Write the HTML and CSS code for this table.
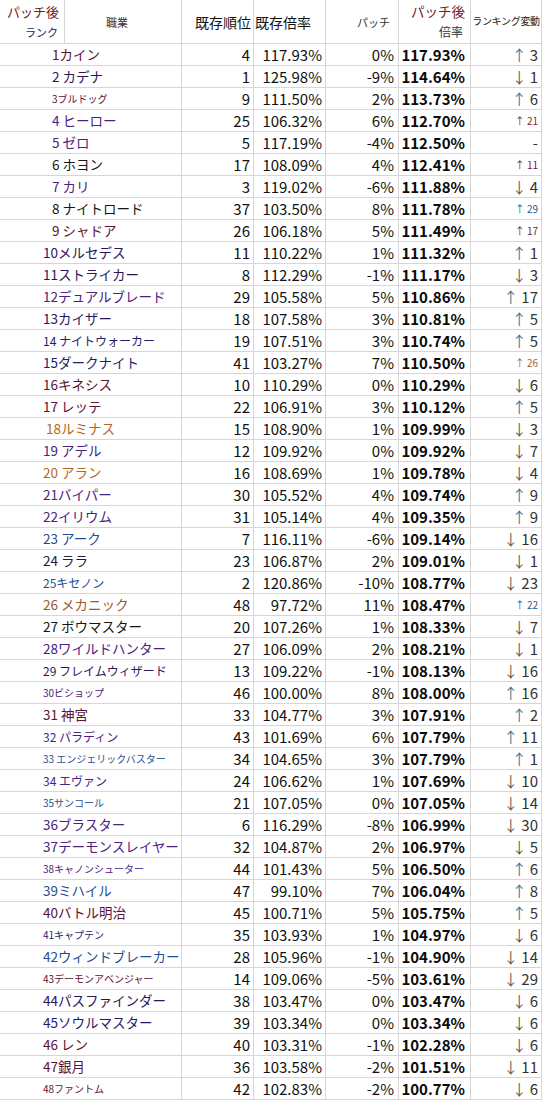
FILE: index.html
```html
<!DOCTYPE html>
<html lang="ja">
<head>
<meta charset="utf-8">
<title>パッチ後ランク</title>
<link rel="stylesheet" href="styles.css">
</head>
<body>
<div class="sheet">
  <div class="hdr">
    <div class="hc h-rank"><span class="h-patch">パッチ後</span><span class="h-ranklbl">ランク</span></div>
    <div class="hc h-job">職業</div>
    <div class="hc h-old">既存順位</div>
    <div class="hc h-oldr">既存倍率</div>
    <div class="hc h-p">パッチ</div>
    <div class="hc h-new"><span class="h-patch">パッチ後</span><span class="h-rate">倍率</span></div>
    <div class="hc h-chg">ランキング変動</div>
  </div>

  <div class="row"><div class="c name one c-mar">1カイン</div><div class="c n">4</div><div class="c n">117.93%</div><div class="c n p">0%</div><div class="c n b">117.93%</div><div class="c chg"><span class="up">↑</span>3</div></div>
  <div class="row"><div class="c name one c-dpu">2 カデナ</div><div class="c n">1</div><div class="c n">125.98%</div><div class="c n p">-9%</div><div class="c n b">114.64%</div><div class="c chg"><span class="dn">↓</span>1</div></div>
  <div class="row"><div class="c name one c-mar sm">3ブルドッグ</div><div class="c n">9</div><div class="c n">111.50%</div><div class="c n p">2%</div><div class="c n b">113.73%</div><div class="c chg"><span class="up">↑</span>6</div></div>
  <div class="row"><div class="c name one c-pur">4 ヒーロー</div><div class="c n">25</div><div class="c n">106.32%</div><div class="c n p">6%</div><div class="c n b">112.70%</div><div class="c chg mini c-red">↑ 21</div></div>
  <div class="row"><div class="c name one c-pur">5 ゼロ</div><div class="c n">5</div><div class="c n">117.19%</div><div class="c n p">-4%</div><div class="c n b">112.50%</div><div class="c chg">-</div></div>
  <div class="row"><div class="c name one c-blk">6 ホヨン</div><div class="c n">17</div><div class="c n">108.09%</div><div class="c n p">4%</div><div class="c n b">112.41%</div><div class="c chg mini c-mar">↑ 11</div></div>
  <div class="row"><div class="c name one c-pur">7 カリ</div><div class="c n">3</div><div class="c n">119.02%</div><div class="c n p">-6%</div><div class="c n b">111.88%</div><div class="c chg"><span class="dn">↓</span>4</div></div>
  <div class="row"><div class="c name one c-blk">8 ナイトロード</div><div class="c n">37</div><div class="c n">103.50%</div><div class="c n p">8%</div><div class="c n b">111.78%</div><div class="c chg mini c-blu">↑ 29</div></div>
  <div class="row"><div class="c name one c-mar">9 シャドア</div><div class="c n">26</div><div class="c n">106.18%</div><div class="c n p">5%</div><div class="c n b">111.49%</div><div class="c chg mini c-mar">↑ 17</div></div>
  <div class="row"><div class="c name c-dpu">10メルセデス</div><div class="c n">11</div><div class="c n">110.22%</div><div class="c n p">1%</div><div class="c n b">111.32%</div><div class="c chg"><span class="up">↑</span>1</div></div>
  <div class="row"><div class="c name c-dpu">11ストライカー</div><div class="c n">8</div><div class="c n">112.29%</div><div class="c n p">-1%</div><div class="c n b">111.17%</div><div class="c chg"><span class="dn">↓</span>3</div></div>
  <div class="row"><div class="c name c-pur">12デュアルブレード</div><div class="c n">29</div><div class="c n">105.58%</div><div class="c n p">5%</div><div class="c n b">110.86%</div><div class="c chg"><span class="up">↑</span>17</div></div>
  <div class="row"><div class="c name c-dpu">13カイザー</div><div class="c n">18</div><div class="c n">107.58%</div><div class="c n p">3%</div><div class="c n b">110.81%</div><div class="c chg"><span class="up">↑</span>5</div></div>
  <div class="row"><div class="c name c-nav smd">14 ナイトウォーカー</div><div class="c n">19</div><div class="c n">107.51%</div><div class="c n p">3%</div><div class="c n b">110.74%</div><div class="c chg"><span class="up">↑</span>5</div></div>
  <div class="row"><div class="c name c-nav">15ダークナイト</div><div class="c n">41</div><div class="c n">103.27%</div><div class="c n p">7%</div><div class="c n b">110.50%</div><div class="c chg mini c-org">↑ 26</div></div>
  <div class="row"><div class="c name c-mar">16キネシス</div><div class="c n">10</div><div class="c n">110.29%</div><div class="c n p">0%</div><div class="c n b">110.29%</div><div class="c chg"><span class="dn">↓</span>6</div></div>
  <div class="row"><div class="c name c-mar">17 レッテ</div><div class="c n">22</div><div class="c n">106.91%</div><div class="c n p">3%</div><div class="c n b">110.12%</div><div class="c chg"><span class="up">↑</span>5</div></div>
  <div class="row"><div class="c name c-org ind2">18ルミナス</div><div class="c n">15</div><div class="c n">108.90%</div><div class="c n p">1%</div><div class="c n b">109.99%</div><div class="c chg"><span class="dn">↓</span>3</div></div>
  <div class="row"><div class="c name c-pur">19 アデル</div><div class="c n">12</div><div class="c n">109.92%</div><div class="c n p">0%</div><div class="c n b">109.92%</div><div class="c chg"><span class="dn">↓</span>7</div></div>
  <div class="row"><div class="c name c-org">20 アラン</div><div class="c n">16</div><div class="c n">108.69%</div><div class="c n p">1%</div><div class="c n b">109.78%</div><div class="c chg"><span class="dn">↓</span>4</div></div>
  <div class="row"><div class="c name c-pur">21バイパー</div><div class="c n">30</div><div class="c n">105.52%</div><div class="c n p">4%</div><div class="c n b">109.74%</div><div class="c chg"><span class="up">↑</span>9</div></div>
  <div class="row"><div class="c name c-pur">22イリウム</div><div class="c n">31</div><div class="c n">105.14%</div><div class="c n p">4%</div><div class="c n b">109.35%</div><div class="c chg"><span class="up">↑</span>9</div></div>
  <div class="row"><div class="c name c-blu">23 アーク</div><div class="c n">7</div><div class="c n">116.11%</div><div class="c n p">-6%</div><div class="c n b">109.14%</div><div class="c chg"><span class="dn">↓</span>16</div></div>
  <div class="row"><div class="c name c-dnv">24 ララ</div><div class="c n">23</div><div class="c n">106.87%</div><div class="c n p">2%</div><div class="c n b">109.01%</div><div class="c chg"><span class="dn">↓</span>1</div></div>
  <div class="row"><div class="c name c-blu smd">25キセノン</div><div class="c n">2</div><div class="c n">120.86%</div><div class="c n p">-10%</div><div class="c n b">108.77%</div><div class="c chg"><span class="dn">↓</span>23</div></div>
  <div class="row"><div class="c name c-brn">26 メカニック</div><div class="c n">48</div><div class="c n">97.72%</div><div class="c n p">11%</div><div class="c n b">108.47%</div><div class="c chg mini c-blu">↑ 22</div></div>
  <div class="row"><div class="c name c-blk">27 ボウマスター</div><div class="c n">20</div><div class="c n">107.26%</div><div class="c n p">1%</div><div class="c n b">108.33%</div><div class="c chg"><span class="dn">↓</span>7</div></div>
  <div class="row"><div class="c name c-pur">28ワイルドハンター</div><div class="c n">27</div><div class="c n">106.09%</div><div class="c n p">2%</div><div class="c n b">108.21%</div><div class="c chg"><span class="dn">↓</span>1</div></div>
  <div class="row"><div class="c name c-dpu smd">29 フレイムウィザード</div><div class="c n">13</div><div class="c n">109.22%</div><div class="c n p">-1%</div><div class="c n b">108.13%</div><div class="c chg"><span class="dn">↓</span>16</div></div>
  <div class="row"><div class="c name c-pur sm">30ビショップ</div><div class="c n">46</div><div class="c n">100.00%</div><div class="c n p">8%</div><div class="c n b">108.00%</div><div class="c chg"><span class="up">↑</span>16</div></div>
  <div class="row"><div class="c name c-mar">31 神宮</div><div class="c n">33</div><div class="c n">104.77%</div><div class="c n p">3%</div><div class="c n b">107.91%</div><div class="c chg"><span class="up">↑</span>2</div></div>
  <div class="row"><div class="c name c-pur smd">32 パラディン</div><div class="c n">43</div><div class="c n">101.69%</div><div class="c n p">6%</div><div class="c n b">107.79%</div><div class="c chg"><span class="up">↑</span>11</div></div>
  <div class="row"><div class="c name c-blu sm">33 エンジェリックバスター</div><div class="c n">34</div><div class="c n">104.65%</div><div class="c n p">3%</div><div class="c n b">107.79%</div><div class="c chg"><span class="up">↑</span>1</div></div>
  <div class="row"><div class="c name c-pur smd">34 エヴァン</div><div class="c n">24</div><div class="c n">106.62%</div><div class="c n p">1%</div><div class="c n b">107.69%</div><div class="c chg"><span class="dn">↓</span>10</div></div>
  <div class="row"><div class="c name c-blu sm">35サンコール</div><div class="c n">21</div><div class="c n">107.05%</div><div class="c n p">0%</div><div class="c n b">107.05%</div><div class="c chg"><span class="dn">↓</span>14</div></div>
  <div class="row"><div class="c name c-pur">36ブラスター</div><div class="c n">6</div><div class="c n">116.29%</div><div class="c n p">-8%</div><div class="c n b">106.99%</div><div class="c chg"><span class="dn">↓</span>30</div></div>
  <div class="row"><div class="c name c-pur">37デーモンスレイヤー</div><div class="c n">32</div><div class="c n">104.87%</div><div class="c n p">2%</div><div class="c n b">106.97%</div><div class="c chg"><span class="dn">↓</span>5</div></div>
  <div class="row"><div class="c name c-pur sm">38キャノンシューター</div><div class="c n">44</div><div class="c n">101.43%</div><div class="c n p">5%</div><div class="c n b">106.50%</div><div class="c chg"><span class="up">↑</span>6</div></div>
  <div class="row"><div class="c name c-blu">39ミハイル</div><div class="c n">47</div><div class="c n">99.10%</div><div class="c n p">7%</div><div class="c n b">106.04%</div><div class="c chg"><span class="up">↑</span>8</div></div>
  <div class="row"><div class="c name c-mar">40バトル明治</div><div class="c n">45</div><div class="c n">100.71%</div><div class="c n p">5%</div><div class="c n b">105.75%</div><div class="c chg"><span class="up">↑</span>5</div></div>
  <div class="row"><div class="c name c-nav sm">41キャプテン</div><div class="c n">35</div><div class="c n">103.93%</div><div class="c n p">1%</div><div class="c n b">104.97%</div><div class="c chg"><span class="dn">↓</span>6</div></div>
  <div class="row"><div class="c name c-blu">42ウィンドブレーカー</div><div class="c n">28</div><div class="c n">105.96%</div><div class="c n p">-1%</div><div class="c n b">104.90%</div><div class="c chg"><span class="dn">↓</span>14</div></div>
  <div class="row"><div class="c name c-mar sm">43デーモンアベンジャー</div><div class="c n">14</div><div class="c n">109.06%</div><div class="c n p">-5%</div><div class="c n b">103.61%</div><div class="c chg"><span class="dn">↓</span>29</div></div>
  <div class="row"><div class="c name c-dpu">44パスファインダー</div><div class="c n">38</div><div class="c n">103.47%</div><div class="c n p">0%</div><div class="c n b">103.47%</div><div class="c chg"><span class="dn">↓</span>6</div></div>
  <div class="row"><div class="c name c-nav">45ソウルマスター</div><div class="c n">39</div><div class="c n">103.34%</div><div class="c n p">0%</div><div class="c n b">103.34%</div><div class="c chg"><span class="dn">↓</span>6</div></div>
  <div class="row"><div class="c name c-mar">46 レン</div><div class="c n">40</div><div class="c n">103.31%</div><div class="c n p">-1%</div><div class="c n b">102.28%</div><div class="c chg"><span class="dn">↓</span>6</div></div>
  <div class="row"><div class="c name c-mar">47銀月</div><div class="c n">36</div><div class="c n">103.58%</div><div class="c n p">-2%</div><div class="c n b">101.51%</div><div class="c chg"><span class="dn">↓</span>11</div></div>
  <div class="row"><div class="c name c-mar sm">48ファントム</div><div class="c n">42</div><div class="c n">102.83%</div><div class="c n p">-2%</div><div class="c n b">100.77%</div><div class="c chg"><span class="dn">↓</span>6</div></div>
</div>
</body>
</html>
```

FILE: styles.css
```css
* { box-sizing: border-box; }
html, body { margin: 0; padding: 0; background: #ffffff; }
body {
  font-family: "Noto Sans CJK JP", "Noto Sans", sans-serif;
  color: #111;
}
.sheet { width: 542px; }

.hdr {
  display: grid;
  grid-template-columns: 65px 117px 72px 72px 73px 72px 71px;
  height: 44px;
}
.hc {
  border-right: 1px solid #d6d6d6;
  border-bottom: 1px solid #d6d6d6;
  display: flex;
  align-items: center;
  white-space: nowrap;
  overflow: hidden;
}
.h-rank {
  flex-direction: column;
  align-items: flex-end;
  justify-content: flex-start;
  padding: 1px 5px 0 0;
}
.h-patch { color: #6e1a28; font-size: 13px; line-height: 21px; }
.h-ranklbl { color: #22226a; font-size: 11px; line-height: 20px; padding-right: 1px; }
.h-job { justify-content: center; font-size: 11px; color: #333; padding-right: 12px; }
.h-old { justify-content: flex-end; font-size: 14px; padding-right: 2px; color: #111; }
.h-oldr { justify-content: flex-start; font-size: 14px; padding-left: 1px; color: #111; }
.h-p { justify-content: flex-end; font-size: 11px; padding-right: 8px; color: #333; }
.h-new {
  flex-direction: column;
  align-items: flex-end;
  justify-content: flex-start;
  padding: 1px 5px 0 0;
}
.h-new .h-patch { font-size: 13.5px; }
.h-rate { font-size: 12px; color: #333; line-height: 20px; padding-right: 2px; }
.h-chg { justify-content: center; font-size: 10px; color: #222; padding-bottom: 2px; letter-spacing: -0.3px; }

.row {
  display: grid;
  grid-template-columns: 182px 72px 72px 73px 72px 71px;
  height: 22px;
}
.c {
  border-right: 1px solid #d6d6d6;
  border-bottom: 1px solid #d6d6d6;
  display: flex;
  align-items: center;
  white-space: nowrap;
  overflow: hidden;
  line-height: 1;
}
.n {
  justify-content: flex-end;
  font-size: 15px;
  padding-right: 3px;
  color: #111;
}
.p { padding-right: 4px; }
.b { font-weight: bold; padding-right: 5px; color: #0a0a0a; }
.chg {
  justify-content: flex-end;
  font-size: 15px;
  padding-right: 3px;
  color: #333;
}
.up, .dn {
  font-family: "Noto Sans CJK JP", sans-serif;
  font-size: 15px;
  margin-right: 3px;
}
.up { color: #4e7889; }
.dn { color: #6b5a4a; }
.mini { font-size: 10px; }

.name {
  font-size: 13.5px;
  padding-left: 43px;
}
.name.one { padding-left: 52px; }
.name.ind2 { padding-left: 46px; }
.name.sm { font-size: 10px; }
.name.smd { font-size: 12px; }

.c-mar { color: #5c1232; }
.c-dpu { color: #2c1458; }
.c-pur { color: #4a2280; }
.c-nav { color: #1e1e6a; }
.c-blk { color: #161616; }
.c-blu { color: #1f4e93; }
.c-dnv { color: #1c1c44; }
.c-org { color: #b8661e; }
.c-brn { color: #9a5a2a; }
.c-red { color: #8a2030; }
.chg.c-blu { color: #2a5a9a; }
.chg.c-org { color: #b0602a; }
.chg.c-mar { color: #6a1a3a; }
```
